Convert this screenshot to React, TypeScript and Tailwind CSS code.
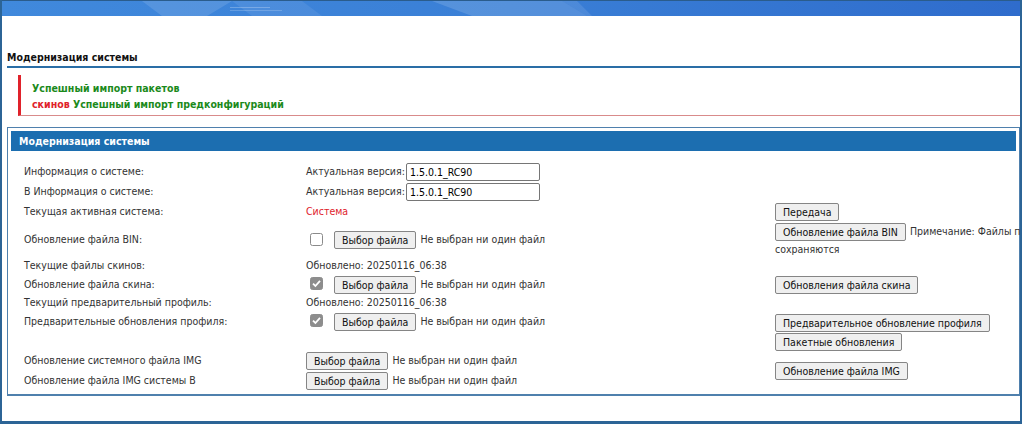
import React from "react";

const font = { fontFamily: '"DejaVu Sans Condensed", "DejaVu Sans", Tahoma, sans-serif' };

function Btn({ children, className = "" }: { children: React.ReactNode; className?: string }) {
  return (
    <button
      type="button"
      className={
        "h-[18px] shrink-0 rounded-[2px] border border-[#858585] bg-[#efefef] px-[7px] text-[10.5px] leading-[16px] text-[#111] whitespace-nowrap " +
        className
      }
      style={font}
    >
      {children}
    </button>
  );
}

function Check({ checked }: { checked?: boolean }) {
  return checked ? (
    <svg width="13" height="13" viewBox="0 0 13 13" className="ml-[4px] mr-[11px] shrink-0 -translate-y-[2px]">
      <rect x="0.5" y="0.5" width="12" height="12" rx="2" fill="#8d8d8d" stroke="#8d8d8d" />
      <path d="M3 6.6 L5.4 9 L10 3.8" fill="none" stroke="#ffffff" strokeWidth="1.8" />
    </svg>
  ) : (
    <svg width="13" height="13" viewBox="0 0 13 13" className="ml-[4px] mr-[11px] shrink-0 -translate-y-[1px]">
      <rect x="0.5" y="0.5" width="12" height="12" rx="2" fill="#ffffff" stroke="#8a8a8a" />
    </svg>
  );
}

function FilePick({ withCheck, checked }: { withCheck?: boolean; checked?: boolean }) {
  return (
    <div className="flex items-center">
      {withCheck && <Check checked={checked} />}
      <Btn>Выбор файла</Btn>
      <span className="ml-[4px] whitespace-nowrap">Не выбран ни один файл</span>
    </div>
  );
}

function VersionInput() {
  return (
    <div className="flex items-center">
      <span className="whitespace-nowrap">Актуальная версия:</span>
      <div className="ml-[1px] flex h-[18px] w-[134px] items-center rounded-[2px] border border-[#767676] bg-white px-[3px] text-[10.5px] leading-[16px] text-black">
        1.5.0.1_RC90
      </div>
    </div>
  );
}

export default function App() {
  return (
    <div className="h-[424px] w-[1024px] overflow-hidden bg-white" style={font}>
      <div className="flex h-[424px] w-[1022px] flex-col overflow-hidden border-x-2 border-b-[3px] border-x-[#2c6496] border-b-[#2c6496] bg-white text-[10.5px] text-[#333]">
        {/* top banner */}
        <div className="relative h-[16px] shrink-0 border-t border-[#2a5c8c] bg-gradient-to-r from-[#4089dc] via-[#3a7fd6] to-[#2f6ccc]">
          <svg className="absolute inset-0" width="1020" height="15" viewBox="0 0 1020 15" preserveAspectRatio="none">
            <polygon points="140,0 230,0 205,15 160,15" fill="#ffffff" opacity="0.12" />
            <polygon points="230,0 300,0 320,15 250,15" fill="#ffffff" opacity="0.08" />
            <polygon points="430,0 560,0 585,15 470,15" fill="#ffffff" opacity="0.14" />
            <polygon points="560,0 575,0 590,15 585,15" fill="#ffffff" opacity="0.1" />
            <rect x="228" y="6" width="40" height="1" fill="#ffffff" opacity="0.25" />
            <rect x="228" y="9" width="52" height="1" fill="#ffffff" opacity="0.2" />
          </svg>
        </div>

        <div className="pl-[5px]">
          {/* title */}
          <div className="mt-[34px] h-[18px] border-b-2 border-[#2a6ea6] text-[10.5px] font-bold leading-[14px] text-[#111]">
            Модернизация системы
          </div>

          {/* message */}
          <div className="ml-[11px] mt-[7px] border-b border-l-[3px] border-b-[#d98b8b] border-l-[#e0222b] pb-[3px] pl-[11px] pt-[5px] font-bold leading-[16px] text-[#1b8a1b]">
            <div>Успешный импорт пакетов</div>
            <div>
              <span className="text-[#e0222b]">скинов</span> Успешный импорт предконфигураций
            </div>
          </div>

          {/* panel */}
          <div className="mt-[11px] border border-b-2 border-[#4f80ad] p-[3px]">
            <div className="h-[20px] bg-[#1c6eb0] pl-[8px] font-bold leading-[20px] text-white">Модернизация системы</div>
            <div className="mt-[11px] grid grid-cols-[282px_469px_1fr] grid-rows-[20px_20px_20px_36px_16px_22px_14px_24px_17px_20px_20px] pl-[13px]">
              {/* row 1 */}
              <div className="flex items-center">Информация о системе:</div>
              <div className="flex items-center">
                <VersionInput />
              </div>
              <div />
              {/* row 2 */}
              <div className="flex items-center">В Информация о системе:</div>
              <div className="flex items-center">
                <VersionInput />
              </div>
              <div />
              {/* row 3 */}
              <div className="flex items-center">Текущая активная система:</div>
              <div className="flex items-center text-[#e0222b]">Система</div>
              <div className="flex items-center">
                <Btn>Передача</Btn>
              </div>
              {/* row 4 */}
              <div className="flex items-center">Обновление файла BIN:</div>
              <div className="flex items-center">
                <FilePick withCheck />
              </div>
              <div className="pt-[1px]">
                <div className="flex h-[18px] items-center whitespace-nowrap">
                  <Btn>Обновление файла BIN</Btn>
                  <span className="ml-[4px]">Примечание: Файлы предконфигурации не</span>
                </div>
                <div className="leading-[16px]">сохраняются</div>
              </div>
              {/* row 5 */}
              <div className="flex items-center">Текущие файлы скинов:</div>
              <div className="flex items-center">Обновлено: 20250116_06:38</div>
              <div />
              {/* row 6 */}
              <div className="flex items-center">Обновление файла скина:</div>
              <div className="flex items-center">
                <FilePick withCheck checked />
              </div>
              <div className="flex items-center">
                <Btn>Обновления файла скина</Btn>
              </div>
              {/* row 7 */}
              <div className="flex items-center">Текущий предварительный профиль:</div>
              <div className="flex items-center">Обновлено: 20250116_06:38</div>
              <div />
              {/* row 8 */}
              <div className="flex items-center">Предварительные обновления профиля:</div>
              <div className="flex items-center">
                <FilePick withCheck checked />
              </div>
              <div className="row-span-2 flex flex-col items-start gap-[1px] pt-[4px]">
                <Btn>Предварительное обновление профиля</Btn>
                <Btn>Пакетные обновления</Btn>
              </div>
              {/* row 9 spacer */}
              <div />
              <div />
              {/* row 10 */}
              <div className="flex items-center">Обновление системного файла IMG</div>
              <div className="flex items-center">
                <FilePick />
              </div>
              <div className="row-span-2 flex items-center">
                <Btn>Обновление файла IMG</Btn>
              </div>
              {/* row 11 */}
              <div className="flex items-center">Обновление файла IMG системы B</div>
              <div className="flex items-center">
                <FilePick />
              </div>
            </div>
          </div>
        </div>
      </div>
    </div>
  );
}
